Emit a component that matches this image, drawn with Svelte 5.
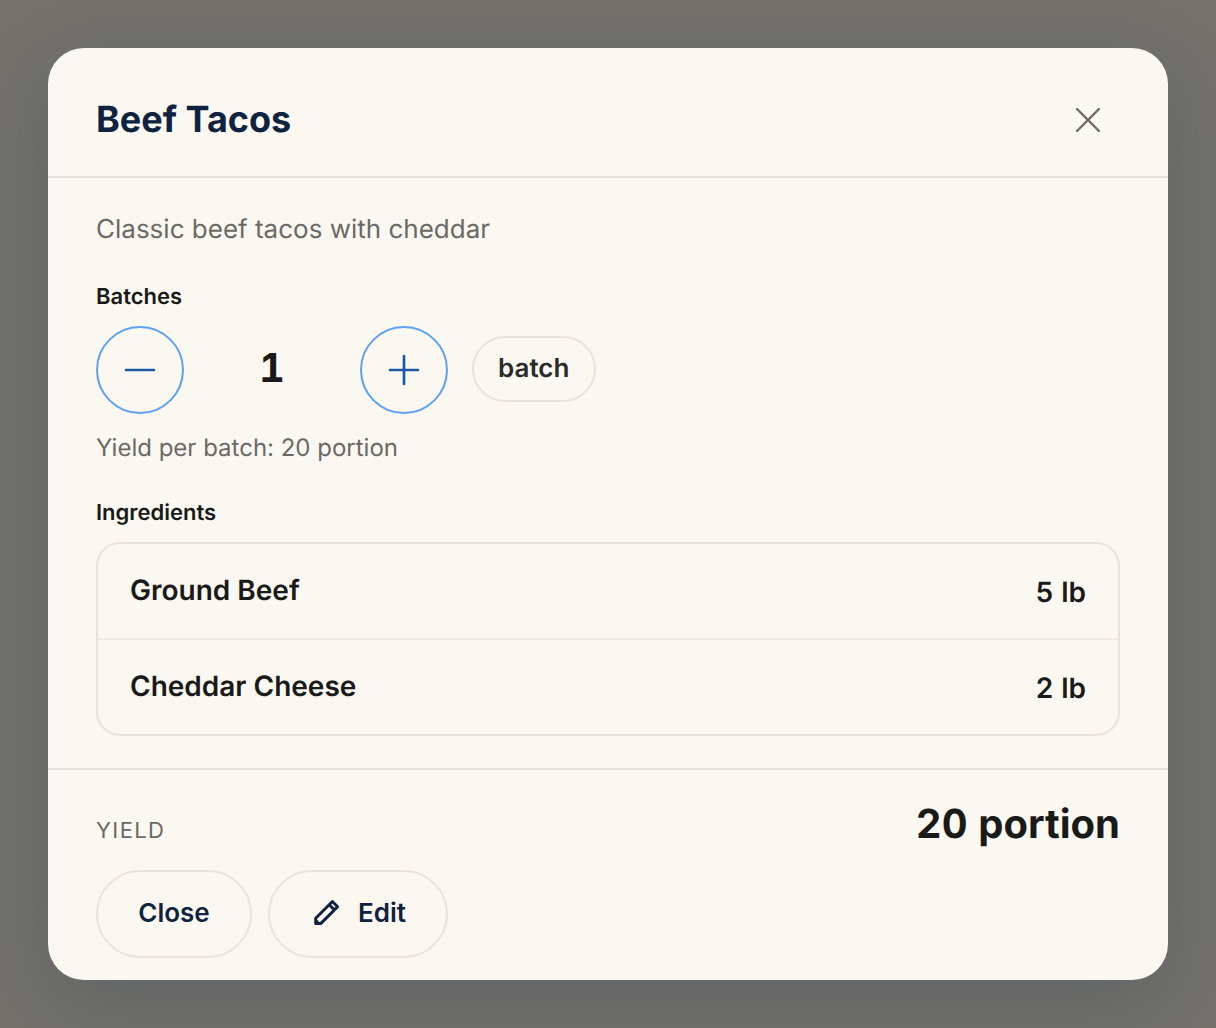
<script>
  const ingredients = [
    { name: 'Ground Beef', amount: '5 lb' },
    { name: 'Cheddar Cheese', amount: '2 lb' }
  ];
  let batches = $state(1);
</script>

<div class="backdrop">
  <div class="modal">
    <header class="head">
      <h2>Beef Tacos</h2>
      <button class="x" aria-label="Close">
        <svg width="24" height="24" viewBox="0 0 24 24" fill="none" stroke="currentColor" stroke-width="2.3" stroke-linecap="round">
          <path d="M1 1 23 23M23 1 1 23" />
        </svg>
      </button>
    </header>

    <div class="body">
      <p class="desc">Classic beef tacos with cheddar</p>

      <div class="label batches-label">Batches</div>
      <div class="stepper">
        <button class="round" aria-label="Less" onclick={() => (batches = Math.max(1, batches - 1))}>
          <svg width="32" height="32" viewBox="0 0 32 32" fill="none" stroke="currentColor" stroke-width="2.7" stroke-linecap="round">
            <path d="M2 16H30" />
          </svg>
        </button>
        <div class="value">{batches}</div>
        <button class="round" aria-label="More" onclick={() => (batches += 1)}>
          <svg width="32" height="32" viewBox="0 0 32 32" fill="none" stroke="currentColor" stroke-width="2.7" stroke-linecap="round">
            <path d="M2 16H30M16 2V30" />
          </svg>
        </button>
        <span class="unit">batch</span>
      </div>
      <p class="per">Yield per batch: 20 portion</p>

      <div class="label ing-label">Ingredients</div>
      <ul class="list">
        {#each ingredients as item}
          <li>
            <span class="name">{item.name}</span>
            <span class="amount">{item.amount}</span>
          </li>
        {/each}
      </ul>
    </div>

    <footer class="foot">
      <div class="total">
        <span class="total-label">YIELD</span>
        <span class="total-value">20 portion</span>
      </div>
      <div class="actions">
        <button class="pill close">Close</button>
        <button class="pill edit">
          <svg width="28" height="28" viewBox="0 0 28 28" fill="none" stroke="currentColor" stroke-width="3" stroke-linejoin="round">
            <path d="M3.700 25.600V20.200L20.400 3.500 25.600 8.700 8.700 25.600Z" />
            <path d="M17.200 6.700 22.400 11.900" />
            <path d="M3.700 25.600V21L8.300 25.600Z" fill="currentColor" stroke-width="1" />
          </svg>
          Edit
        </button>
      </div>
    </footer>
  </div>
</div>

<style>
  :global(body) {
    margin: 0;
    font-family: Inter, "Liberation Sans", sans-serif;
    text-rendering: geometricPrecision;
  }

  .backdrop {
    height: 1028px;
    box-sizing: border-box;
    padding: 48px;
    background: #73726d;
  }

  .modal {
    height: 932px;
    box-sizing: border-box;
    background: #fbf8f2;
    border-radius: 36px;
    box-shadow: 0 24px 80px rgba(15, 35, 64, 0.18);
    overflow: hidden;
  }

  button {
    font-family: inherit;
    background: none;
    cursor: pointer;
    padding: 0;
  }

  .head {
    height: 114px;
    box-sizing: content-box;
    display: flex;
    align-items: center;
    justify-content: space-between;
    padding: 14px 68px 0 48px;
    border-bottom: 2px solid #e8e4da;
  }

  h2 {
    margin: 0;
    font-size: 36px;
    font-weight: 700;
    color: #0f2340;
  }

  .x {
    display: flex;
    margin-top: 2px;
    border: none;
    color: #6b6963;
  }

  .body {
    height: 590px;
    box-sizing: border-box;
    padding: 33px 48px 0;
  }

  .desc {
    margin: 0;
    font-size: 26px;
    line-height: 38px;
    color: #6b6963;
  }

  .label {
    font-size: 22px;
    font-weight: 600;
    line-height: 28px;
    color: #1a1a18;
  }

  .batches-label {
    margin-top: 34px;
  }

  .stepper {
    display: flex;
    align-items: center;
    margin-top: 15px;
  }

  .round {
    width: 88px;
    height: 88px;
    box-sizing: border-box;
    display: flex;
    align-items: center;
    justify-content: center;
    border: 2px solid #5ea1ef;
    border-radius: 50%;
    color: #1c5aa6;
  }

  .value {
    width: 176px;
    padding-bottom: 6px;
    text-align: center;
    font-size: 40px;
    font-weight: 700;
    font-variant-numeric: tabular-nums;
    color: #1a1a18;
  }

  .unit {
    margin: 0 0 2px 24px;
    height: 66px;
    box-sizing: border-box;
    padding: 0 24.5px 2px 24px;
    display: flex;
    align-items: center;
    border: 2px solid #e8e4da;
    border-radius: 33px;
    font-size: 26px;
    font-weight: 600;
    color: #2a2a28;
  }

  .per {
    margin: 18px 0 0;
    font-size: 24px;
    line-height: 32px;
    color: #6b6963;
  }

  .ing-label {
    margin-top: 35px;
  }

  .list {
    list-style: none;
    margin: 15px 0 0;
    padding: 0;
    border: 2px solid #e8e4da;
    border-radius: 24px;
  }

  li {
    height: 94px;
    box-sizing: border-box;
    padding: 0 32px;
    display: flex;
    align-items: center;
    justify-content: space-between;
    color: #1a1a18;
    font-size: 28px;
    font-weight: 600;
  }

  li + li {
    height: 96px;
    border-top: 2px solid #f0ece3;
  }

  .name {
    margin-top: -2px;
  }

  .amount {
    margin-top: 2px;
    font-variant-numeric: tabular-nums;
  }

  .foot {
    border-top: 2px solid #e8e4da;
    padding: 0 48px;
  }

  .total {
    height: 100px;
    display: flex;
    align-items: center;
    justify-content: space-between;
  }

  .total-label {
    margin-top: 22px;
    font-size: 22px;
    letter-spacing: 1.4px;
    color: #6b6963;
  }

  .total-value {
    margin-top: 6px;
    font-size: 40px;
    font-weight: 700;
    font-variant-numeric: tabular-nums;
    color: #1a1a18;
  }

  .actions {
    display: flex;
    gap: 16px;
  }

  .pill {
    height: 88px;
    box-sizing: border-box;
    display: flex;
    align-items: center;
    padding-bottom: 4px;
    border: 2px solid #e8e4da;
    border-radius: 44px;
    font-size: 26px;
    font-weight: 600;
    color: #0f2340;
  }

  .close {
    width: 156px;
    justify-content: center;
  }

  .edit {
    width: 180px;
    justify-content: center;
    gap: 18px;
    padding-left: 2px;
  }
</style>
